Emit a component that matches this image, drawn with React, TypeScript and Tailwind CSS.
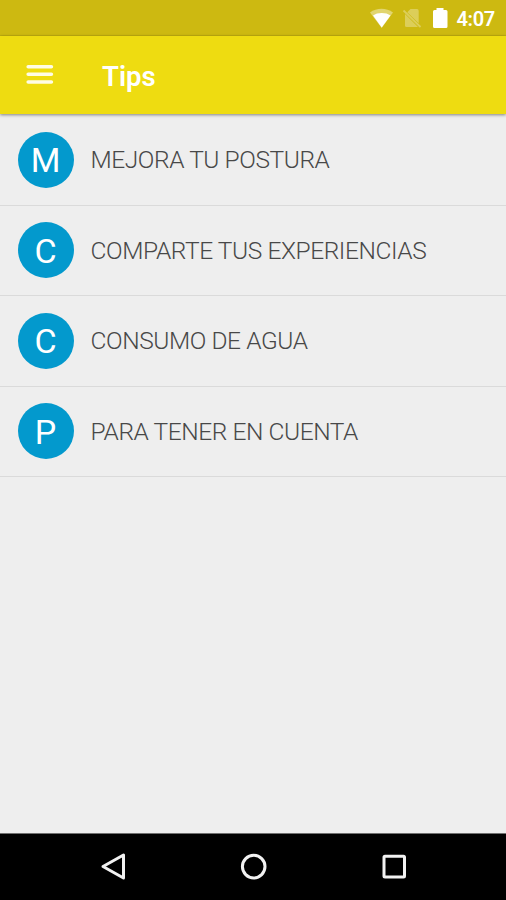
interface Tip {
  title: string;
  height: string;
}

const TIPS: Tip[] = [
  { title: 'MEJORA TU POSTURA', height: 'h-[91px]' },
  { title: 'COMPARTE TUS EXPERIENCIAS', height: 'h-[90px]' },
  { title: 'CONSUMO DE AGUA', height: 'h-[91px]' },
  { title: 'PARA TENER EN CUENTA', height: 'h-[90px]' },
];

function StatusBar() {
  return (
    <div className="flex h-9 shrink-0 items-center justify-end border-b border-[#c2b00f] bg-[#cdb911] pr-[11px] text-white">
      <svg className="h-9 w-[87px]" viewBox="0 0 87 36" fill="currentColor">
        {/* Wifi */}
        <path d="M1 12.5C7.5 7.6 17.5 7.6 24 12.5L12.7 28Z" opacity=".4" />
        <path d="M4 15.5C8.5 12.2 17 12.2 21.5 15.5L12.7 27.5Z" />
        {/* No sim */}
        <g opacity=".3">
          <path d="M41.5 9H48Q49.7 9 49.7 11V23.3L38.3 12.2Z" />
          <path d="M36 14V25.5Q36 27 37.5 27H49Z" />
          <path d="M34.5 10.5L51.5 27" stroke="currentColor" strokeWidth="1.8" />
        </g>
        {/* Battery */}
        <path d="M67.5 8H74.5V10H77Q78.5 10 78.5 11.5V26.5Q78.5 28 77 28H65.5Q64 28 64 26.5V11.5Q64 10 65.5 10H67.5Z" />
      </svg>
      <span className="pt-0.5 text-[20px] leading-none font-semibold tracking-[-0.3px]">4:07</span>
    </div>
  );
}

function AppBar() {
  return (
    <header className="z-10 flex h-[78px] shrink-0 items-center bg-[#eedc11] pl-[26px] text-white shadow-[0_1px_3px_rgba(0,0,0,0.45)]">
      <svg className="h-[78px] w-7" viewBox="0 0 28 78" stroke="#fffce6" strokeWidth="3.6" strokeLinecap="round">
        <path d="M2.2 30.7H25.4M2.2 38.3H25.4M2.2 46H25.4" />
      </svg>
      <h1 className="ml-12 pt-1 text-[27.5px] leading-none font-semibold">Tips</h1>
    </header>
  );
}

function NavBar() {
  return (
    <nav className="flex h-[67px] shrink-0 items-center justify-center border-t border-[#707070] bg-black">
      <svg className="h-[66px] w-full" viewBox="0 0 506 66" fill="none" stroke="#f2f2f2" strokeWidth="3">
        <path d="M123.5 21V44L103 32.5Z" strokeLinejoin="round" />
        <circle cx="253.7" cy="32.6" r="11.3" />
        <rect x="384" y="22.2" width="20.5" height="20.8" rx="1" />
      </svg>
    </nav>
  );
}

export default function App() {
  return (
    <div className="flex h-screen w-full flex-col overflow-hidden bg-[#eeeeee] font-[Roboto,sans-serif]">
      <StatusBar />
      <AppBar />

      <ul className="flex-1 pt-px">
        {TIPS.map((tip) => (
          <li
            key={tip.title}
            className={`flex items-center border-b border-[#dadada] pb-px pl-[17.5px] ${tip.height}`}
          >
            <span className="flex size-14 shrink-0 items-center justify-center rounded-full bg-[#0399cd] pt-px text-[34px] leading-none text-white">
              {tip.title[0]}
            </span>
            <span className="ml-[15.5px] pt-0.5 pl-[1.5px] text-[24.5px] leading-none font-[350] tracking-[-0.42px] whitespace-nowrap text-[#484848]">
              {tip.title}
            </span>
          </li>
        ))}
      </ul>

      <NavBar />
    </div>
  );
}
